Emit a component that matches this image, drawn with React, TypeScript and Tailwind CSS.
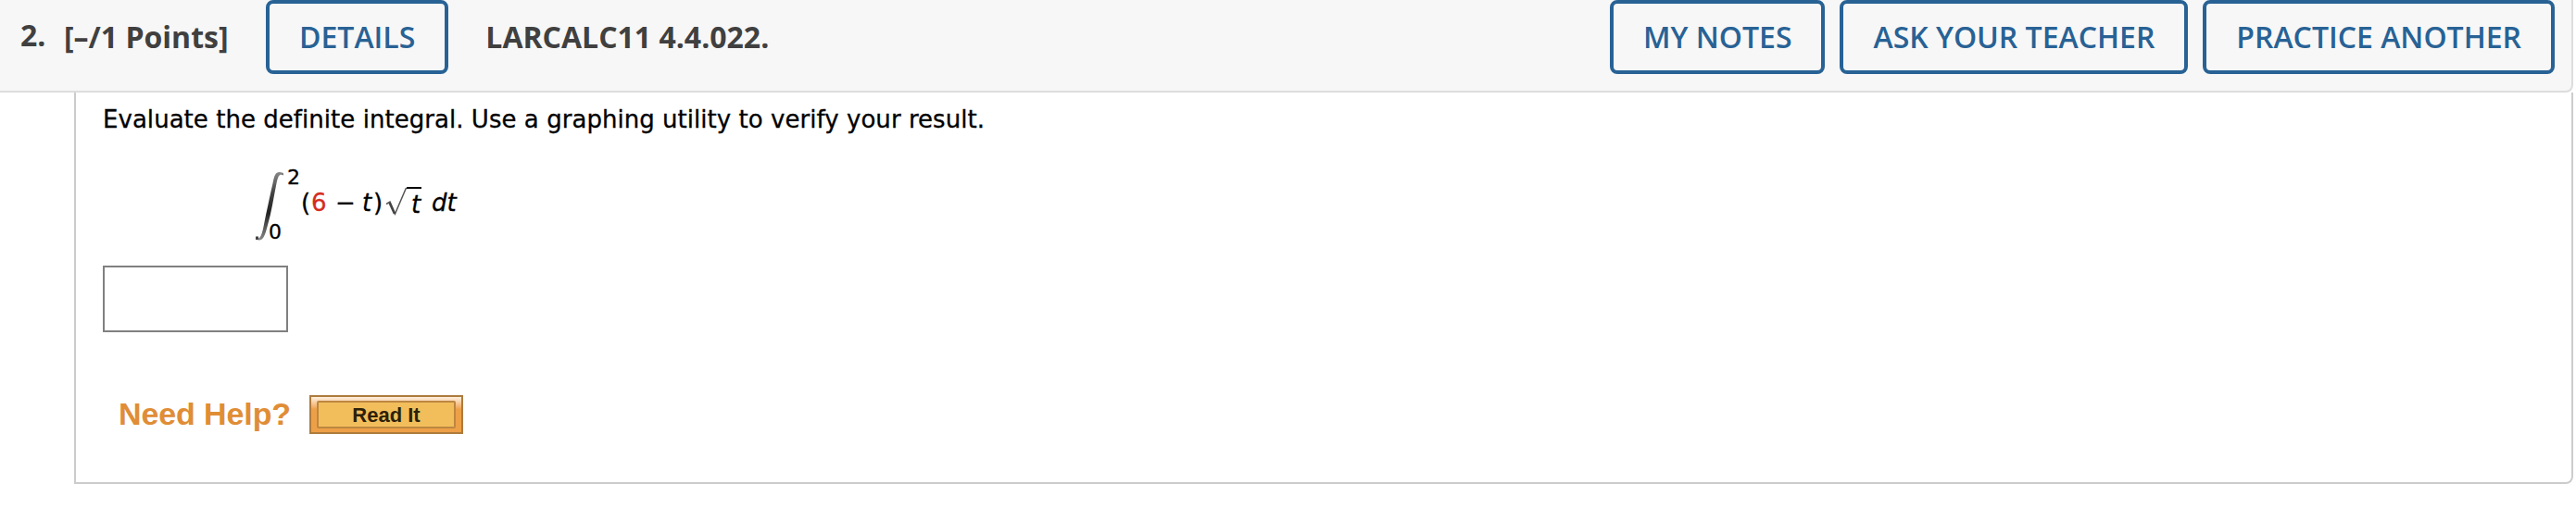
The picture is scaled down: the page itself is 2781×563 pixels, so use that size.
const actions = ['MY NOTES', 'ASK YOUR TEACHER', 'PRACTICE ANOTHER'];

const OutlineButton = ({ label }: { label: string }) => (
  <button
    type="button"
    className="h-20 shrink-0 rounded-lg border-4 border-[#286295] px-8 text-[32px] leading-[72px] font-semibold whitespace-nowrap text-[#286295]"
  >
    {label}
  </button>
);

const Integral = () => (
  <div className="flex h-[82px] items-start pl-[165px] text-[26px] leading-8 text-black [-webkit-text-stroke:0.3px]">
    <svg width="32" height="76" viewBox="0 0 32 76" className="shrink-0">
      <defs>
        <linearGradient id="stem" x1="0" y1="0" x2="0" y2="1">
          <stop offset="0" stopColor="#888" />
          <stop offset="0.3" stopColor="#444" />
          <stop offset="0.6" stopColor="#222" />
          <stop offset="1" stopColor="#888" />
        </linearGradient>
      </defs>
      <path
        d="M1 72.500C5 73.500 6.500 69 8.500 60C11.500 45 14.500 31 18.500 13C20.500 2 22.500 -1 30 2V4.500C26 2.500 24.500 4 22.500 13C19.500 28 17 45 12.500 60C9.500 72 7 76 1 74Z"
        fill="url(#stem)"
      />
      <path d="M0 70.500h3v3.500H0Z" fill="#444" />
    </svg>
    {/* Limits */}
    <div className="flex h-[74px] w-[17px] shrink-0 flex-col justify-between text-[22px] leading-4">
      <span className="-mt-px ml-0.5">2</span>
      <span className="-ml-[18px]">0</span>
    </div>
    <div className="flex pt-[18px]">
      <span className="w-[11px]">(</span>
      <span className="w-[26px] text-[#d52b1e]">6</span>
      <span className="w-[29px]">−</span>
      <span className="w-[12px] italic">t</span>
      <span className="w-[14px]">)</span>
    </div>
    <svg width="38" height="34" viewBox="0 0 38 34" className="mt-[17px] shrink-0">
      <path d="M0 18.500L4 16L9.500 29L21.500 1" fill="none" stroke="#555" strokeWidth="1.500" />
      <path d="M3.500 17L9 29" stroke="#444" strokeWidth="2.500" />
      <path d="M22 1H38" stroke="#000" strokeWidth="2" />
    </svg>
    <span className="-ml-[11px] w-[22px] pt-5 italic">t</span>
    <span className="pt-[18px] italic">dt</span>
  </div>
);

export default function App() {
  return (
    <div className="h-[563px] w-[2781px] overflow-hidden bg-white font-['Open_Sans',sans-serif]">
      {/* Question header */}
      <header className="flex h-[100px] w-[2778px] items-start rounded-br-lg border-r-2 border-b-2 border-[#ddd] bg-[#f7f7f7] pr-[18px] text-[32px] font-bold whitespace-nowrap text-[#404040]">
        <span className="w-[69px] pl-[22px] leading-[76px]">2.</span>
        <span className="w-[218px] leading-[80px]">[–/1 Points]</span>
        <OutlineButton label="DETAILS" />
        <span className="pl-10 leading-[80px]">LARCALC11 4.4.022.</span>
        <div className="ml-auto flex gap-4">
          {actions.map((label) => (
            <OutlineButton key={label} label={label} />
          ))}
        </div>
      </header>

      {/* Question body */}
      <main className="ml-20 h-[423px] w-[2698px] rounded-br-lg border-x-2 border-b-2 border-[#ccc] pl-[29px] font-['Verdana','DejaVu_Sans',sans-serif]">
        <p className="h-[85px] pt-[13px] text-[26px] leading-8 tracking-[0.04px] whitespace-nowrap text-black [-webkit-text-stroke:0.3px]">
          Evaluate the definite integral. Use a graphing utility to verify your result.
        </p>
        <Integral />
        <input
          type="text"
          aria-label="Answer"
          className="mt-5 block h-[72px] w-[200px] border-2 border-[#808080] bg-white px-2 text-[26px]"
        />
        <div className="mt-[68px] flex h-[42px] items-start pl-[17px] font-['Liberation_Sans',sans-serif] font-bold whitespace-nowrap">
          <span className="w-[206px] text-[34px] leading-10 tracking-[-0.1px] text-[#e08d36]">Need Help?</span>
          <button
            type="button"
            className="h-[42px] w-[166px] border-2 border-[#ad7b3d] bg-linear-to-b from-[#fff0df] to-[#eda047] to-35% px-1.5 pt-1 pb-1"
          >
            <span className="block h-[30px] rounded-xs border-2 border-[#bd8741] bg-[#f2be5c] text-[22px] leading-[27px] text-[#2c2108]">
              Read It
            </span>
          </button>
        </div>
      </main>
    </div>
  );
}
